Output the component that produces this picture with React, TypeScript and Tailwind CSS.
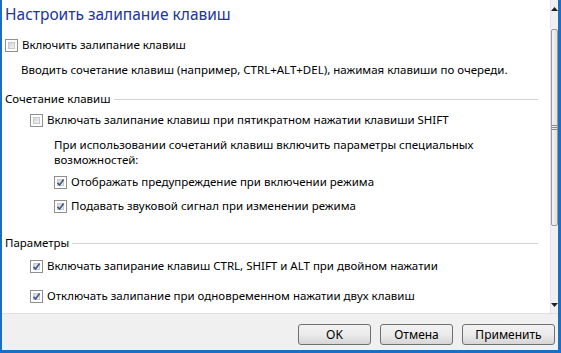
import React from 'react'

// ── Small Win7-style controls ────────────────────────────────────────────────

function Check({ checked = false }: { checked?: boolean }) {
  return (
    <span className="relative flex h-[13px] w-[13px] shrink-0 items-center justify-center border border-[#8e8f8f] bg-white">
      <span className="absolute inset-[2px] border border-[#c9c9c9] bg-gradient-to-br from-[#d4d4d4] to-[#f4f4f4]" />
      {checked && (
        <svg className="relative" width="9" height="9" viewBox="0 0 9 9">
          <path d="M1.5 4.8 L3.6 7 L7.6 1.6" fill="none" stroke="#3f5a8f" strokeWidth="1.7" />
        </svg>
      )}
    </span>
  )
}

function Row({ indent, checked, label, className = '' }: { indent: string; checked?: boolean; label: string; className?: string }) {
  return (
    <div className={`flex h-4 items-center gap-[4px] ${indent} ${className}`}>
      <Check checked={checked} />
      <span className="whitespace-nowrap">{label}</span>
    </div>
  )
}

function Group({ title, className = '' }: { title: string; className?: string }) {
  return (
    <div className={`flex h-4 items-center gap-[3px] pr-[12px] ${className}`}>
      <span className="whitespace-nowrap">{title}</span>
      <span className="h-px flex-1 bg-[#d5d5d5]" />
    </div>
  )
}

function Btn({ label, w }: { label: string; w: string }) {
  return (
    <button className={`${w} h-[21px] rounded-[3px] border border-[#707070] bg-gradient-to-b from-[#f2f2f2] via-[#ebebeb] to-[#d6d6d6] text-[12px] leading-none text-black`}>
      {label}
    </button>
  )
}

// ── Dialog ───────────────────────────────────────────────────────────────────

export default function App() {
  return (
    <div
      className="flex h-[353px] w-[561px] flex-col border-b-[3px] border-l-2 border-r-[3px] border-[#1c6ec4] bg-white text-[11.5px] text-black"
      style={{ fontFamily: '"Noto Sans", "Open Sans", sans-serif' }}
    >
      <div className="flex h-[313px]">
        <div className="flex-1 pl-[3px]">
          <div className="h-[28px] text-[15.5px] leading-[28px] text-[#22359a]">Настроить залипание клавиш</div>
          <Row indent="" label="Включить залипание клавиш" className="mt-[9px]" />
          <div className="mt-[9px] flex h-4 items-center pl-[16px]">
            Вводить сочетание клавиш (например, CTRL+ALT+DEL), нажимая клавиши по очереди.
          </div>
          <Group title="Сочетание клавиш" className="mt-[13px]" />
          <Row indent="pl-[25px]" label="Включать залипание клавиш при пятикратном нажатии клавиши SHIFT" className="mt-[5px]" />
          <div className="mt-[9px] flex flex-col pl-[49px]">
            <span className="flex h-[15px] items-center">При использовании сочетаний клавиш включить параметры специальных</span>
            <span className="flex h-[15px] items-center">возможностей:</span>
          </div>
          <Row indent="pl-[49px]" checked label="Отображать предупреждение при включении режима" className="mt-[7px]" />
          <Row indent="pl-[49px]" checked label="Подавать звуковой сигнал при изменении режима" className="mt-[8px]" />
          <Group title="Параметры" className="mt-[21px]" />
          <Row indent="pl-[25px]" checked label="Включать запирание клавиш CTRL, SHIFT и ALT при двойном нажатии" className="mt-[7px]" />
          <Row indent="pl-[25px]" checked label="Отключать залипание при одновременном нажатии двух клавиш" className="mt-[14px]" />
        </div>

        {/* scrollbar */}
        <div className="flex w-[8px] flex-col border-l border-[#e6e6e6] bg-[#f0f0f0]">
          <div className="flex h-[17px] items-center justify-center">
            <svg width="7" height="4" viewBox="0 0 7 4"><path d="M0 4 L3.5 0 L7 4 Z" fill="#222" /></svg>
          </div>
          <div className="mt-[12px] flex h-[197px] items-center justify-center rounded-[2px] border border-[#9a9a9a] bg-gradient-to-r from-[#f4f4f4] to-[#e2e2e2]">
            <div className="flex w-[5px] flex-col gap-px">
              <span className="h-px bg-[#8a8a8a]" />
              <span className="h-px bg-[#8a8a8a]" />
              <span className="h-px bg-[#8a8a8a]" />
            </div>
          </div>
          <div className="mt-auto flex h-[17px] items-center justify-center">
            <svg width="7" height="4" viewBox="0 0 7 4"><path d="M0 0 L7 0 L3.5 4 Z" fill="#222" /></svg>
          </div>
        </div>
      </div>

      <div className="flex flex-1 items-start justify-end gap-[9px] border-t border-[#dfdfdf] bg-[#f0f0f0] pr-[3px] pt-[10px]">
        <Btn label="OK" w="w-[73px]" />
        <Btn label="Отмена" w="w-[73px]" />
        <Btn label="Применить" w="w-[93px]" />
      </div>
    </div>
  )
}
